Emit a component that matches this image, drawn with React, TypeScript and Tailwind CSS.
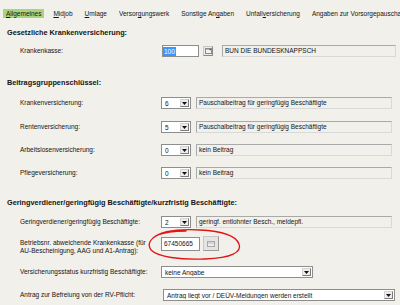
import React from 'react';

const tabs = [
  { pre: '', key: 'A', post: 'llgemeines', active: true },
  { pre: '', key: 'M', post: 'idjob' },
  { pre: '', key: 'U', post: 'mlage' },
  { pre: 'Versor', key: 'g', post: 'ungswerk' },
  { pre: 'Sonstige An', key: 'g', post: 'aben' },
  { pre: 'Unfall', key: 'v', post: 'ersicherung' },
  { pre: 'Angaben zur Vorsorgepauschale', key: '', post: '' },
];

function Arrow() {
  return (
    <span className="flex w-[9px] shrink-0 items-center justify-center border border-[#d4d4d4] border-r-[#7c7c7c] border-b-[#7c7c7c] bg-[#ececec]">
      <svg width="5" height="3" viewBox="0 0 5 3">
        <path d="M0 0h5L2.5 3z" fill="#111" />
      </svg>
    </span>
  );
}

function Combo({ value, w }: { value: string; w: string }) {
  return (
    <div className={`flex h-[12px] shrink-0 items-stretch border border-[#8d8d8d] bg-white p-px ${w}`}>
      <span className="flex-1 overflow-hidden whitespace-nowrap pl-[2px] leading-[10px]">{value}</span>
      <Arrow />
    </div>
  );
}

function Field({ value, w }: { value: string; w: string }) {
  return (
    <div
      className={`h-[12px] shrink-0 overflow-hidden whitespace-nowrap border border-[#a9a9a9] border-r-[#d9d9d9] border-b-[#d9d9d9] bg-[#f1f0eb] pl-[2px] leading-[10px] ${w}`}
    >
      {value}
    </div>
  );
}

function Heading({ children, className }: { children: React.ReactNode; className: string }) {
  return (
    <div className={`flex h-[14px] items-center whitespace-nowrap pl-px text-[7.3px] font-bold ${className}`}>
      {children}
    </div>
  );
}

function Row({ label, className, children }: { label: string; className: string; children: React.ReactNode }) {
  return (
    <div className={`flex h-[14px] items-center pl-[14px] ${className}`}>
      <span className="w-[141px] shrink-0 whitespace-nowrap">{label}</span>
      {children}
    </div>
  );
}

function CodeRow({ label, code, text, className }: { label: string; code: string; text: string; className: string }) {
  return (
    <Row label={label} className={className}>
      <Combo value={code} w="w-[30px]" />
      <div className="ml-[5px]">
        <Field value={text} w="w-[196px]" />
      </div>
    </Row>
  );
}

export default function App() {
  return (
    <div className="relative h-[305px] w-[400px] overflow-hidden bg-[#f1f0eb] font-['Liberation_Sans',Arial,sans-serif] text-[6.5px] text-[#141414]">
      {/* tab strip */}
      <div className="flex h-[18px] items-stretch whitespace-nowrap pl-[3px] pt-[9px] leading-[9px]">
        {tabs.map((t, i) => (
          <React.Fragment key={i}>
            {i > 0 && <span className="ml-[4px] mr-[2px] w-px bg-[#a3a3a3]" />}
            <span className={t.active ? 'bg-[#a9d47f] px-[3px]' : 'px-[3px]'}>
              {t.pre}
              {t.key && <span className="underline underline-offset-1">{t.key}</span>}
              {t.post}
            </span>
          </React.Fragment>
        ))}
      </div>

      <div className="pl-[6px]">
        <Heading className="mt-[8px]">Gesetzliche Krankenversicherung:</Heading>
        <Row label="Krankenkasse:" className="mt-[4px]">
          <div className="ml-px flex h-[12px] w-[37px] shrink-0 items-center border border-[#8d8d8d] bg-white leading-[9px]">
            <span className="bg-[#3399ff] px-px text-white">100</span>
          </div>
          <div className="ml-[4px] flex h-[10px] w-[10px] shrink-0 items-center justify-center border border-[#c6c6c6] border-r-[#8a8a8a] border-b-[#8a8a8a] bg-[#ececec]">
            <svg width="7" height="6" viewBox="0 0 7 6">
              <rect x="0.5" y="0.5" width="6" height="5" fill="#f4f4f4" stroke="#8a8a8a" />
              <rect x="1" y="1" width="5" height="1" fill="#b8b8b8" />
              <rect x="4.5" y="1" width="1.5" height="1.2" fill="#d62a2a" />
            </svg>
          </div>
          <div className="ml-[9px]">
            <Field value="BUN DIE BUNDESKNAPPSCH" w="w-[174px]" />
          </div>
        </Row>

        <Heading className="mt-[18px]">Beitragsgruppenschlüssel:</Heading>
        <CodeRow label="Krankenversicherung:" code="6" text="Pauschalbeitrag für geringfügig Beschäftigte" className="mt-[6px]" />
        <CodeRow label="Rentenversicherung:" code="5" text="Pauschalbeitrag für geringfügig Beschäftigte" className="mt-[10px]" />
        <CodeRow label="Arbeitslosenversicherung:" code="0" text="kein Beitrag" className="mt-[9px]" />
        <CodeRow label="Pflegeversicherung:" code="0" text="kein Beitrag" className="mt-[9px]" />

        <Heading className="mt-[16px]">Geringverdiener/geringfügig Beschäftigte/kurzfristig Beschäftigte:</Heading>
        <CodeRow
          label="Geringverdiener/geringfügig Beschäftigte:"
          code="2"
          text="geringf. entlohnter Besch., meldepfl."
          className="mt-[5px]"
        />

        <div className="mt-[8px] flex items-start pl-[14px]">
          <span className="w-[141px] shrink-0 whitespace-nowrap pt-[2px] leading-[8px]">
            Betriebsnr. abweichende Krankenkasse (für
            <br />
            AU-Bescheinigung, AAG und A1-Antrag):
          </span>
          <div className="flex h-[14px] w-[39px] shrink-0 items-center border border-[#8d8d8d] bg-white pl-[2px] leading-none">
            67450665
          </div>
          <div className="ml-[3px] -mt-px flex h-[15px] w-[16px] shrink-0 items-center justify-center border border-[#c8c8c8] border-r-[#9a9a9a] border-b-[#9a9a9a] bg-[#e4e4e2]">
            <svg width="8" height="6" viewBox="0 0 8 6">
              <rect x="0.5" y="0.5" width="7" height="5" fill="#ededed" stroke="#a8a8a8" />
              <line x1="1" y1="2" x2="7" y2="2" stroke="#bdbdbd" />
            </svg>
          </div>
        </div>

        <Row label="Versicherungsstatus kurzfristig Beschäftigte:" className="mt-[10px]">
          <Combo value="keine Angabe" w="w-[152px]" />
        </Row>
        <Row label="Antrag zur Befreiung von der RV-Pflicht:" className="mt-[9px]">
          <div className="ml-[2px]">
            <Combo value="Antrag liegt vor / DEÜV-Meldungen werden erstellt" w="w-[232px]" />
          </div>
        </Row>
      </div>

      {/* hand-drawn red marker around the Betriebsnummer */}
      <svg className="pointer-events-none absolute left-0 top-0" width="400" height="305" viewBox="0 0 400 305">
        <path
          d="M153 238 C161 231 180 229 200 230 C222 231 236 236 239 244 C242 252 232 258 205 259 C180 260 158 257 151 250 C147 244 150 239 158 235 C167 231 177 231 186 231"
          fill="none"
          stroke="#e01515"
          strokeWidth="1.3"
          strokeLinecap="round"
        />
      </svg>
    </div>
  );
}
